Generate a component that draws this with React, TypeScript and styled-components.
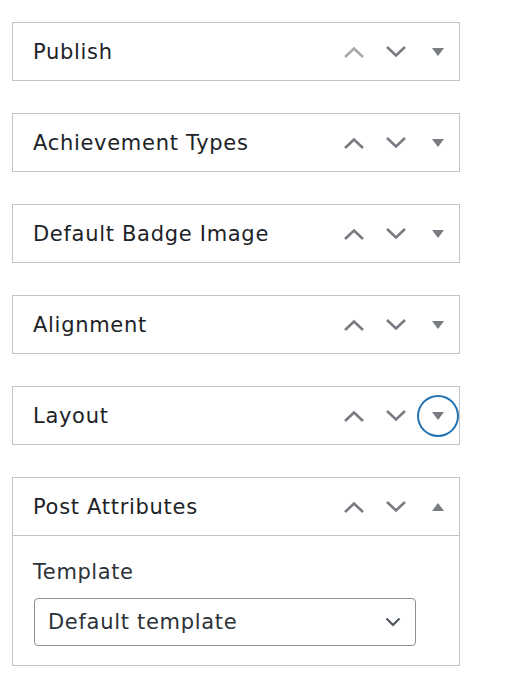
import React from "react";
import styled, { createGlobalStyle } from "styled-components";

const Global = createGlobalStyle`
  body { margin: 0; background: #fff; font-family: "DejaVu Sans", "Noto Sans", sans-serif; }
`;

const Page = styled.div`
  padding: 22px 0 0 12px;
  display: flex;
  flex-direction: column;
  gap: 32px;
  width: 448px;
`;

const Box = styled.div`
  border: 1px solid #c3c4c7;
  background: #fff;
`;

const Header = styled.div<{ $open?: boolean }>`
  display: flex;
  align-items: center;
  height: 57px;
  border-bottom: ${(p) => (p.$open ? "1px solid #c3c4c7" : "none")};
`;

const Title = styled.h2`
  flex: 1;
  margin: 0;
  padding-left: 20px;
  font-size: 21px;
  letter-spacing: 0.7px;
  font-weight: normal;
  color: #1d2327;
`;

const Btn = styled.button<{ $disabled?: boolean; $focus?: boolean }>`
  width: 42px;
  height: 42px;
  border: none;
  background: none;
  padding: 0;
  display: flex;
  align-items: center;
  justify-content: center;
  color: ${(p) => (p.$disabled ? "#a7aaad" : "#787c82")};
  border-radius: 50%;
  box-shadow: ${(p) => (p.$focus ? "inset 0 0 0 2px #2271b1" : "none")};
`;

const Body = styled.div`
  padding: 24px 20px 19px 20px;
`;

const Label = styled.div`
  font-size: 21px;
  letter-spacing: 0.6px;
  line-height: 24px;
  color: #2c3338;
  margin-bottom: 14px;
`;

const Select = styled.div`
  width: 382px;
  height: 48px;
  box-sizing: border-box;
  border: 1px solid #8c8f94;
  border-radius: 4px;
  display: flex;
  align-items: center;
  justify-content: space-between;
  padding: 0 14px 0 13px;
  font-size: 21px;
  letter-spacing: 0.7px;
  color: #2c3338;
  margin-left: 1px;
`;

const Up = () => (
  <svg width="22" height="14" viewBox="0 0 22 14">
    <path d="M2 12 L11 3.5 L20 12" fill="none" stroke="currentColor" strokeWidth="2.6" />
  </svg>
);
const Down = () => (
  <svg width="22" height="14" viewBox="0 0 22 14">
    <path d="M2 2 L11 10.5 L20 2" fill="none" stroke="currentColor" strokeWidth="2.6" />
  </svg>
);
const Tri = ({ up }: { up?: boolean }) => (
  <svg width="12" height="8" viewBox="0 0 12 8">
    <path d={up ? "M0 8 L6 0 L12 8 Z" : "M0 0 L12 0 L6 8 Z"} fill="currentColor" />
  </svg>
);

const boxes = [
  { title: "Publish", upDisabled: true },
  { title: "Achievement Types" },
  { title: "Default Badge Image" },
  { title: "Alignment" },
  { title: "Layout", focus: true },
];

export default function App() {
  return (
    <>
      <Global />
      <Page>
        {boxes.map((b) => (
          <Box key={b.title}>
            <Header>
              <Title>{b.title}</Title>
              <Btn $disabled={b.upDisabled}><Up /></Btn>
              <Btn><Down /></Btn>
              <Btn $focus={b.focus}><Tri /></Btn>
            </Header>
          </Box>
        ))}
        <Box>
          <Header $open>
            <Title>Post Attributes</Title>
            <Btn><Up /></Btn>
            <Btn><Down /></Btn>
            <Btn><Tri up /></Btn>
          </Header>
          <Body>
            <Label>Template</Label>
            <Select>
              <span>Default template</span>
              <svg width="16" height="10" viewBox="0 0 16 10">
                <path d="M1.5 1.5 L8 8 L14.5 1.5" fill="none" stroke="#50575e" strokeWidth="2.2" />
              </svg>
            </Select>
          </Body>
        </Box>
      </Page>
    </>
  );
}
